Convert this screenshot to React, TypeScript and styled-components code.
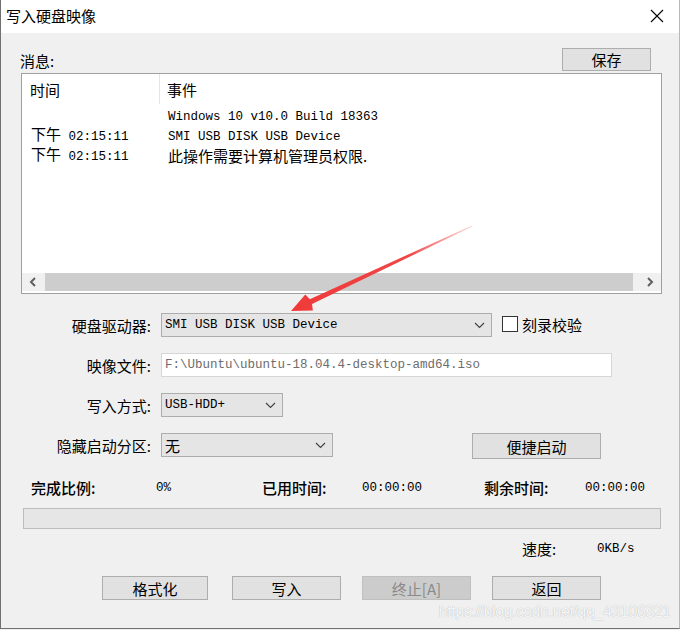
import styled, { createGlobalStyle } from "styled-components";

const GlobalStyle = createGlobalStyle`
  body {
    margin: 0;
    background: #f0f0f0;
  }
`;

const uiFont = `"Noto Sans CJK SC", "Liberation Sans", sans-serif`;
const monoFont = `"Liberation Mono", "Noto Sans CJK SC", monospace`;

const Window = styled.div`
  position: relative;
  width: 680px;
  height: 629px;
  box-sizing: border-box;
  border-left: 1px solid #707070;
  border-right: 1px solid #b8b8b8;
  border-bottom: 1px solid #707070;
  background: #f0f0f0;
  font-family: ${uiFont};
  font-size: 15px;
  color: #000;
  overflow: hidden;
`;

const TitleBar = styled.div`
  height: 33px;
  background: #fff;
  display: flex;
  align-items: center;
  justify-content: space-between;
  padding: 0 15px 2px 5px;
  box-sizing: border-box;
`;

const Title = styled.span`
  font-size: 15px;
  line-height: 1;
`;

const HeaderRow = styled.div`
  display: flex;
  justify-content: space-between;
  align-items: flex-end;
  height: 24px;
  margin: 14px 28px 0 19px;
`;

const Caption = styled.span`
  line-height: 20px;
`;

const Button = styled.button<{ $w: number; $h?: number; $ml?: number }>`
  width: ${(p) => p.$w}px;
  height: ${(p) => p.$h ?? 24}px;
  box-sizing: border-box;
  margin: 0 0 0 ${(p) => p.$ml ?? 0}px;
  padding: 0;
  border: 1px solid #adadad;
  background: #e1e1e1;
  font-family: ${uiFont};
  font-size: 15px;
  color: #000;
  display: flex;
  align-items: center;
  justify-content: center;

  &:disabled {
    background: #cccccc;
    border-color: #bfbfbf;
    color: #8a8a8a;
  }
`;

const ListBox = styled.div`
  margin: 2px 0 0 20px;
  width: 641px;
  height: 221px;
  box-sizing: border-box;
  border: 1px solid #a0a0a0;
  background: #fff;
  display: flex;
  flex-direction: column;
`;

const ListHead = styled.div`
  display: grid;
  grid-template-columns: 138px 1fr;
  height: 30px;
`;

const HeadCell = styled.div<{ $first?: boolean }>`
  display: flex;
  align-items: center;
  padding-left: ${(p) => (p.$first ? 8 : 7)}px;
  border-right: ${(p) => (p.$first ? "1px solid #e5e5e5" : "none")};
`;

const ListRows = styled.div`
  flex: 1;
`;

const LogRow = styled.div`
  display: grid;
  grid-template-columns: 138px 1fr;
  height: 20px;
  align-items: center;
`;

const LogCell = styled.div<{ $first?: boolean }>`
  padding-left: ${(p) => (p.$first ? 9 : 8)}px;
  white-space: nowrap;
  line-height: 20px;
`;

const Mono = styled.span<{ $color?: string }>`
  font-family: ${monoFont};
  font-size: 12.5px;
  color: ${(p) => p.$color ?? "inherit"};
`;

const ScrollBar = styled.div`
  display: flex;
  height: 18px;
  margin-bottom: 2px;
  background: #f0f0f0;
`;

const ScrollArrow = styled.div`
  width: 22px;
  display: flex;
  align-items: center;
  justify-content: center;
`;

const Thumb = styled.div`
  flex: 1;
  margin: 0 6px 0 1px;
  background: #cdcdcd;
`;

const Form = styled.div`
  display: flex;
  flex-direction: column;
  gap: 16px;
  margin-top: 19px;
`;

const FormRow = styled.div`
  display: grid;
  grid-template-columns: 151px auto;
  column-gap: 9px;
  height: 24px;
  align-items: center;
`;

const Label = styled.span`
  text-align: right;
  padding-right: 1px;
  white-space: nowrap;
`;

const Field = styled.div`
  display: flex;
  align-items: flex-start;
  height: 24px;
`;

const Combo = styled.div<{ $w: number }>`
  width: ${(p) => p.$w}px;
  height: 24px;
  box-sizing: border-box;
  border: 1px solid #adadad;
  background: #e5e5e5;
  display: flex;
  align-items: center;
  justify-content: space-between;
  padding: 0 6px 0 3px;
`;

const TextInput = styled.div`
  width: 451px;
  height: 24px;
  box-sizing: border-box;
  border: 1px solid #d6d6d6;
  background: #fff;
  display: flex;
  align-items: center;
  padding-left: 3px;
`;

const CheckBox = styled.div`
  width: 16px;
  height: 16px;
  box-sizing: border-box;
  border: 1px solid #333;
  background: #fff;
  margin: 3px 0 0 10px;
`;

const CheckLabel = styled.span`
  margin-left: 4px;
  line-height: 24px;
`;

const StatusRow = styled.div`
  display: grid;
  grid-template-columns: 125px 106px 100px 122px 101px 1fr;
  height: 20px;
  align-items: center;
  padding-left: 30px;
  margin-top: 20px;
`;

const StatusLabel = styled.span`
  font-weight: 500;
  white-space: nowrap;
`;

const Progress = styled.div`
  margin: 11px 0 0 22px;
  width: 638px;
  height: 21px;
  box-sizing: border-box;
  border: 1px solid #bcbcbc;
  background: #e6e6e6;
`;

const SpeedRow = styled.div`
  display: grid;
  grid-template-columns: 75px auto;
  height: 20px;
  align-items: center;
  margin-top: 9px;
  padding-left: 521px;
`;

const ButtonRow = styled.div`
  display: flex;
  margin-top: 18px;
  padding-left: 101px;
`;

const Overlay = styled.svg`
  position: absolute;
  left: -1px;
  top: 0;
  width: 680px;
  height: 630px;
  pointer-events: none;
`;

const Watermark = styled.span`
  position: absolute;
  right: 8px;
  bottom: 7px;
  font-family: "Liberation Sans", sans-serif;
  font-size: 16px;
  letter-spacing: -0.4px;
  color: rgba(255, 255, 255, 0.9);
  text-shadow: 0 0 1px rgba(0, 0, 0, 0.3);
`;

const Chevron = () => (
  <svg width="11" height="7" viewBox="0 0 11 7">
    <polyline points="1,1 5.5,5.5 10,1" fill="none" stroke="#444" strokeWidth="1.2" />
  </svg>
);

const ScrollGlyph = ({ dir }: { dir: "left" | "right" }) => (
  <svg width="8" height="10" viewBox="0 0 8 10">
    <polyline
      points={dir === "left" ? "6,1 2,5 6,9" : "2,1 6,5 2,9"}
      fill="none"
      stroke="#606060"
      strokeWidth="2"
    />
  </svg>
);

const logs = [
  { time: null, event: "Windows 10 v10.0 Build 18363", mono: true },
  { time: "02:15:11", event: "SMI USB DISK USB Device", mono: true },
  { time: "02:15:11", event: "此操作需要计算机管理员权限.", mono: false },
];

// arrow geometry: tail (472,226) -> tip (291,311)
const tail = { x: 472, y: 226 };
const tip = { x: 291, y: 311 };
const len = Math.hypot(tip.x - tail.x, tip.y - tail.y);
const ux = (tip.x - tail.x) / len;
const uy = (tip.y - tail.y) / len;
const nx = -uy;
const ny = ux;
const bx = tip.x - ux * 22;
const by = tip.y - uy * 22;
const pt = (x: number, y: number) => `${x.toFixed(1)},${y.toFixed(1)}`;
const arrowPoints = [
  pt(tail.x + nx * 0.5, tail.y + ny * 0.5),
  pt(bx + nx * 2.6, by + ny * 2.6),
  pt(bx + nx * 9 + ux * 2, by + ny * 9 + uy * 2),
  pt(tip.x, tip.y),
  pt(bx - nx * 9 + ux * 2, by - ny * 9 + uy * 2),
  pt(bx - nx * 2.6, by - ny * 2.6),
  pt(tail.x - nx * 0.5, tail.y - ny * 0.5),
].join(" ");

export default function App() {
  return (
    <>
      <GlobalStyle />
      <Window>
        <TitleBar>
          <Title>写入硬盘映像</Title>
          <svg width="14" height="14" viewBox="0 0 14 14">
            <path d="M1 1 L13 13 M13 1 L1 13" stroke="#000" strokeWidth="1.1" />
          </svg>
        </TitleBar>

        <HeaderRow>
          <Caption>消息:</Caption>
          <Button $w={89} $h={23}>保存</Button>
        </HeaderRow>

        <ListBox>
          <ListHead>
            <HeadCell $first>时间</HeadCell>
            <HeadCell>事件</HeadCell>
          </ListHead>
          <ListRows>
            {logs.map((l, i) => (
              <LogRow key={i}>
                <LogCell $first>
                  {l.time && (
                    <>
                      下午<Mono> {l.time}</Mono>
                    </>
                  )}
                </LogCell>
                <LogCell>{l.mono ? <Mono>{l.event}</Mono> : l.event}</LogCell>
              </LogRow>
            ))}
          </ListRows>
          <ScrollBar>
            <ScrollArrow>
              <ScrollGlyph dir="left" />
            </ScrollArrow>
            <Thumb />
            <ScrollArrow>
              <ScrollGlyph dir="right" />
            </ScrollArrow>
          </ScrollBar>
        </ListBox>

        <Form>
          <FormRow>
            <Label>硬盘驱动器:</Label>
            <Field>
              <Combo $w={331}>
                <Mono>SMI USB DISK USB Device</Mono>
                <Chevron />
              </Combo>
              <CheckBox />
              <CheckLabel>刻录校验</CheckLabel>
            </Field>
          </FormRow>
          <FormRow>
            <Label>映像文件:</Label>
            <Field>
              <TextInput>
                <Mono $color="#6d6d6d">F:\Ubuntu\ubuntu-18.04.4-desktop-amd64.iso</Mono>
              </TextInput>
            </Field>
          </FormRow>
          <FormRow>
            <Label>写入方式:</Label>
            <Field>
              <Combo $w={122}>
                <Mono>USB-HDD+</Mono>
                <Chevron />
              </Combo>
            </Field>
          </FormRow>
          <FormRow>
            <Label>隐藏启动分区:</Label>
            <Field>
              <Combo $w={172}>
                <span>无</span>
                <Chevron />
              </Combo>
              <Button $w={129} $h={26} $ml={139}>便捷启动</Button>
            </Field>
          </FormRow>
        </Form>

        <StatusRow>
          <StatusLabel>完成比例:</StatusLabel>
          <Mono>0%</Mono>
          <StatusLabel>已用时间:</StatusLabel>
          <Mono>00:00:00</Mono>
          <StatusLabel>剩余时间:</StatusLabel>
          <Mono>00:00:00</Mono>
        </StatusRow>

        <Progress />

        <SpeedRow>
          <span>速度:</span>
          <Mono>0KB/s</Mono>
        </SpeedRow>

        <ButtonRow>
          <Button $w={106}>格式化</Button>
          <Button $w={109} $ml={24}>写入</Button>
          <Button $w={109} $ml={21} disabled>
            终止[A]
          </Button>
          <Button $w={109} $ml={21}>返回</Button>
        </ButtonRow>

        <Overlay viewBox="0 0 680 630">
          <defs>
            <linearGradient id="arrowFade" x1={tail.x} y1={tail.y} x2={tip.x} y2={tip.y} gradientUnits="userSpaceOnUse">
              <stop offset="0" stopColor="#f04a4a" stopOpacity="0.2" />
              <stop offset="0.35" stopColor="#f03c3c" stopOpacity="0.95" />
              <stop offset="1" stopColor="#f03a3a" />
            </linearGradient>
          </defs>
          <polygon points={arrowPoints} fill="url(#arrowFade)" />
        </Overlay>

        <Watermark>https://blog.csdn.net/qq_43106321</Watermark>
      </Window>
    </>
  );
}
